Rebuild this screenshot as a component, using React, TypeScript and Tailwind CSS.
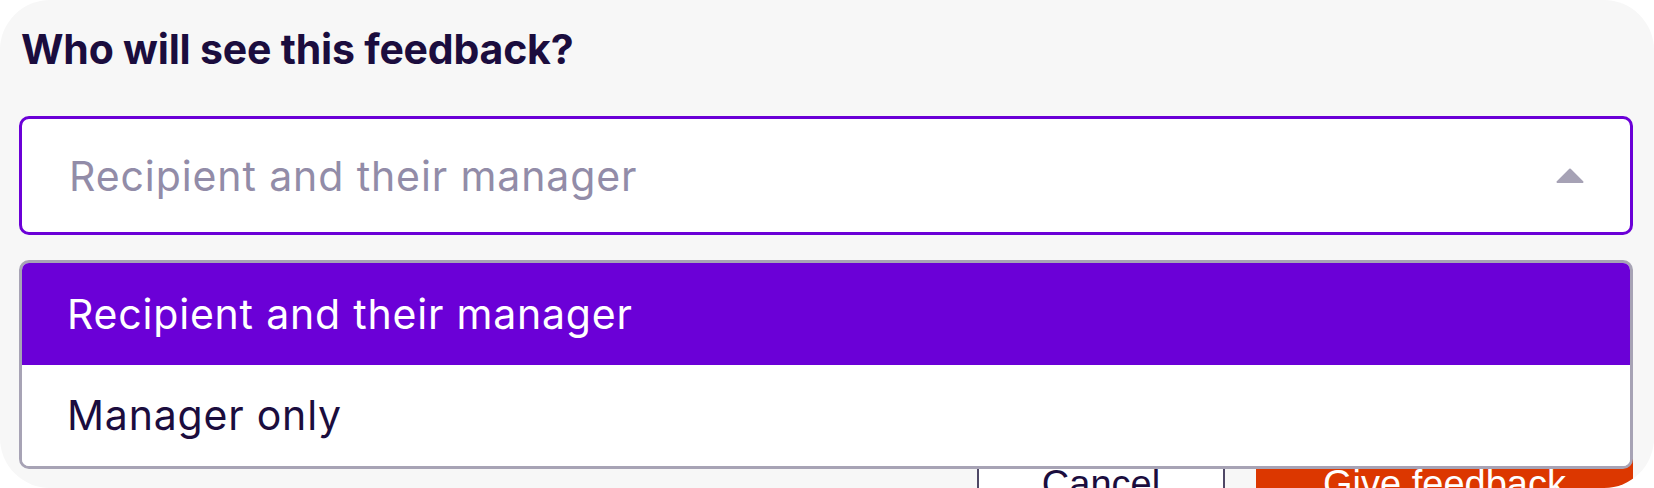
import React from 'react';

const options = ['Recipient and their manager', 'Manager only'];

const CaretUp = () => (
  <svg width="28" height="15" viewBox="0 0 28 15" className="shrink-0">
    <path
      d="M14 1.5 L26.5 14 H1.5 Z"
      fill="#a6a2b5"
      stroke="#a6a2b5"
      strokeWidth="2"
      strokeLinejoin="round"
    />
  </svg>
);

export default function App() {
  const selected = 0;

  return (
    <div className="w-[1654px] h-[488px] bg-white overflow-hidden">
      <div className="relative h-full overflow-hidden rounded-[50px] bg-[#f7f7f7] pl-[19px] pr-[21px] pt-[25px] font-['Inter',sans-serif]">
        {/* Question */}
        <h2 className="pl-[2px] text-[41px] leading-[48px] font-bold tracking-[-0.2px] text-[#1b0d3e]">
          Who will see this feedback?
        </h2>

        {/* Select + open list */}
        <div className="relative mt-[43px]">
          <button className="flex h-[119px] w-full items-center justify-between rounded-[10px] border-[3px] border-[#6b00d7] bg-white pl-[47px] pr-[46px]">
            <span className="text-[41px] leading-[48px] tracking-[0.9px] text-[#928ca8]">
              {options[selected]}
            </span>
            <CaretUp />
          </button>

          <ul className="absolute left-0 right-0 top-[144px] z-10 overflow-hidden rounded-[10px] border-[3px] border-[#a7a3b5] bg-white">
            {options.map((opt, i) => (
              <li
                key={opt}
                className={`flex h-[101.5px] items-center pl-[45px] text-[41px] leading-[48px] tracking-[0.8px] ${
                  i === selected ? 'bg-[#6b00d7] text-white' : 'bg-white text-[#1b0d3e]'
                }`}
              >
                {opt}
              </li>
            ))}
          </ul>
        </div>

        {/* Actions (mostly covered by the list) */}
        <div className="mt-[213px] flex justify-end gap-[31px] font-['Liberation_Sans',Arial,sans-serif]">
          <button className="h-[72px] w-[248px] border-2 border-[#4f4866] bg-white text-[38px] leading-[44px] text-[#1b0d3e]">
            Cancel
          </button>
          <button className="h-[72px] w-[377px] rounded-br-[28px] bg-[#dc3700] text-[38px] leading-[44px] text-white">
            Give feedback
          </button>
        </div>
      </div>
    </div>
  );
}
